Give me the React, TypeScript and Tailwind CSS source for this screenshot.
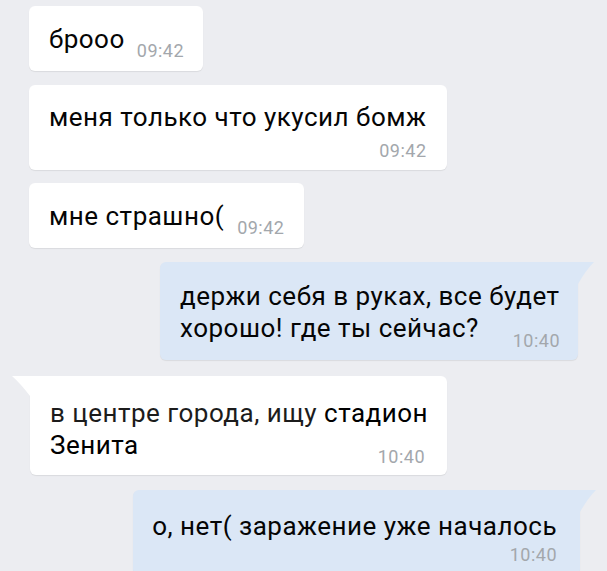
import React from 'react';

const font = { fontFamily: 'Roboto, "Noto Sans", sans-serif' };

// small triangle that sticks out of the bubble's square corner
const TailRight: React.FC = () => (
  <svg className="absolute top-0 -right-[17px]" width="18" height="23" viewBox="0 0 18 23">
    <path d="M0 0 L17 0 Q9 8 1 22 L0 22 Z" fill="#dbe7f6" />
  </svg>
);

const TailLeft: React.FC = () => (
  <svg className="absolute top-0 -left-[18px]" width="19" height="21" viewBox="0 0 19 21">
    <path d="M19 0 L0 0 Q9 8 18 20 L19 20 Z" fill="#ffffff" />
  </svg>
);

const Time: React.FC<{ children: React.ReactNode; className?: string }> = ({ children, className = '' }) => (
  <span className={`text-[18px] leading-[20px] tracking-[0.5px] text-[#a3a7ac] whitespace-nowrap ${className}`}>{children}</span>
);

const App: React.FC = () => {
  return (
    <div className="w-[607px] h-[571px] overflow-hidden bg-[#ecedf1] pt-[6px] text-[26px] leading-[32px] tracking-[0.5px] text-[#050505]" style={font}>
      <div className="flex flex-col items-start">
        {/* брооо */}
        <div className="ml-[29px] flex items-end bg-white rounded-[6px] shadow-[0_1px_1px_rgba(0,0,0,0.08)] pl-[20px] pr-[19px] pt-[17px] pb-[16px]">
          <span>брооо</span>
          <Time className="ml-[12px] -mb-[6px]">09:42</Time>
        </div>

        <div className="ml-[29px] mt-[14px] flex flex-col bg-white rounded-[6px] shadow-[0_1px_1px_rgba(0,0,0,0.08)] px-[20px] pt-[16px] pb-[9px]">
          <span>меня только что укусил бомж</span>
          <Time className="mt-[8px] self-end">09:42</Time>
        </div>

        <div className="ml-[29px] mt-[13px] flex items-end bg-white rounded-[6px] shadow-[0_1px_1px_rgba(0,0,0,0.08)] pl-[20px] pr-[20px] pt-[17px] pb-[16px]">
          <span>мне страшно(</span>
          <Time className="ml-[13px] -mb-[6px]">09:42</Time>
        </div>

        {/* outgoing */}
        <div className="relative self-end mr-[29px] mt-[14px] w-[418px] bg-[#dbe7f6] rounded-[6px] rounded-tr-none shadow-[0_1px_1px_rgba(0,0,0,0.08)] pl-[20px] pr-[18px] pt-[18px] pb-[16px]">
          <TailRight />
          <div className="whitespace-nowrap">держи себя в руках, все будет</div>
          <div className="flex items-end">
            <span className="whitespace-nowrap">хорошо! где ты сейчас?</span>
            <Time className="ml-auto -mb-[7px]">10:40</Time>
          </div>
        </div>

        <div className="relative ml-[30px] mt-[16px] w-[417px] bg-white rounded-[6px] rounded-tl-none shadow-[0_1px_1px_rgba(0,0,0,0.08)] pl-[20px] pr-[22px] pt-[21px] pb-[14px]">
          <TailLeft />
          <div className="whitespace-nowrap">
            <span className="text-[#1c1c1c]">в центре города, ищу </span>
            <span className="text-black">стадион</span>
          </div>
          <div className="flex items-end">
            <span className="text-black">Зенита</span>
            <Time className="ml-auto -mb-[6px]">10:40</Time>
          </div>
        </div>

        <div className="relative self-end mr-[27px] mt-[15px] bg-[#dbe7f6] rounded-[6px] rounded-tr-none shadow-[0_1px_1px_rgba(0,0,0,0.08)] pl-[19px] pr-[23px] pt-[20px] pb-[10px] flex flex-col">
          <TailRight />
          <span className="whitespace-nowrap">о, нет( заражение уже началось</span>
          <Time className="self-end mt-[3px]">10:40</Time>
        </div>
      </div>
    </div>
  );
};

export default App;
